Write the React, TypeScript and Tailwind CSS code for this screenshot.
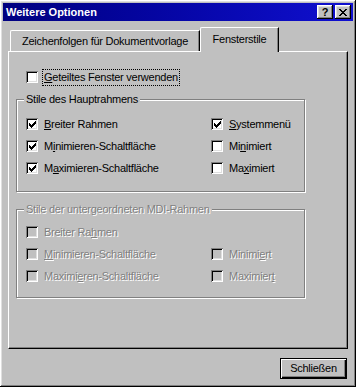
import React from "react"

const raised =
  "shadow-[inset_-1px_-1px_0_#000,inset_1px_1px_0_#fff,inset_-2px_-2px_0_#808080,inset_2px_2px_0_#dfdfdf]"

// "&" marks the accelerator letter
function Label({ text }: { text: string }) {
  const i = text.indexOf("&")
  if (i < 0) return <>{text}</>
  return (
    <>
      {text.slice(0, i)}
      <u className="underline-offset-[1px]">{text[i + 1]}</u>
      {text.slice(i + 2)}
    </>
  )
}

function CheckMark() {
  return (
    <svg width="7" height="7" viewBox="0 0 7 7" shapeRendering="crispEdges">
      <path
        fill="#000"
        d="M6 0h1v1h-1z M5 1h2v1h-2z M0 2h1v1h-1z M4 2h3v1h-3z M0 3h2v1h-2z M3 3h3v1h-3z M0 4h5v1h-5z M1 5h3v1h-3z M2 6h1v1h-1z"
      />
    </svg>
  )
}

function Check({
  label,
  checked = false,
  disabled = false,
  focus = false,
}: {
  label: string
  checked?: boolean
  disabled?: boolean
  focus?: boolean
}) {
  return (
    <div className="flex items-center h-[22px]">
      <div
        className={`w-[12px] h-[12px] flex items-center justify-center shrink-0 shadow-[inset_1px_1px_0_#808080,inset_-1px_-1px_0_#fff,inset_2px_2px_0_#000,inset_-2px_-2px_0_#dfdfdf] ${
          disabled ? "bg-[#c0c0c0]" : "bg-white"
        }`}
      >
        {checked && <CheckMark />}
      </div>
      <span
        className={`ml-[4px] px-[1px] whitespace-nowrap leading-[15px] border border-dotted ${
          focus ? "border-black" : "border-transparent"
        } ${disabled ? "text-[#808080] [text-shadow:1px_1px_0_#fff]" : "text-black"}`}
      >
        <Label text={label} />
      </span>
    </div>
  )
}

function Group({
  title,
  disabled = false,
  className = "",
  children,
}: {
  title: string
  disabled?: boolean
  className?: string
  children: React.ReactNode
}) {
  return (
    <div
      className={`relative w-[289px] border border-[#808080] shadow-[1px_1px_0_#fff,inset_1px_1px_0_#fff] pl-[9px] ${className}`}
    >
      <span
        className={`absolute -top-[8px] left-[7px] bg-[#c0c0c0] px-[2px] leading-[15px] whitespace-nowrap ${
          disabled ? "text-[#808080] [text-shadow:1px_1px_0_#fff]" : "text-black"
        }`}
      >
        {title}
      </span>
      <div className="grid grid-cols-[185px_1fr]">{children}</div>
    </div>
  )
}

export default function App() {
  return (
    <div
      className={`w-[356px] h-[387px] bg-[#c0c0c0] p-[3px] flex flex-col text-[11px] tracking-[-0.25px] text-black ${raised}`}
      style={{ fontFamily: '"Liberation Sans", Arial, sans-serif' }}
    >
      {/* Titelleiste */}
      <div className="h-[18px] flex items-center justify-between bg-gradient-to-r from-[#000080] to-[#1010d0] pl-[3px] pr-[2px]">
        <span className="text-white font-bold text-[11px] tracking-normal whitespace-nowrap">Weitere Optionen</span>
        <div className="flex gap-[2px]">
          <div className={`w-[16px] h-[14px] bg-[#c0c0c0] flex items-center justify-center ${raised}`}>
            <span className="font-bold text-[11px] leading-none mt-[1px]">?</span>
          </div>
          <div className={`w-[16px] h-[14px] bg-[#c0c0c0] flex items-center justify-center ${raised}`}>
            <svg width="8" height="7" viewBox="0 0 8 7" shapeRendering="crispEdges">
              <path
                fill="#000"
                d="M0 0h2v1h-2z M6 0h2v1h-2z M1 1h2v1h-2z M5 1h2v1h-2z M2 2h4v1h-4z M3 3h2v1h-2z M2 4h4v1h-4z M1 5h2v1h-2z M5 5h2v1h-2z M0 6h2v1h-2z M6 6h2v1h-2z"
              />
            </svg>
          </div>
        </div>
      </div>

      <div className="px-[5px] mt-[6px] flex flex-col">
        {/* Registerkarten */}
        <div className="flex items-end pl-[2px]">
          <div className="w-[190px] h-[21px] flex items-center justify-center border-t border-l border-white rounded-tl-[2px] border-r border-r-black shadow-[inset_-1px_0_0_#808080] whitespace-nowrap">
            Zeichenfolgen für Dokumentvorlage
          </div>
          <div className="relative z-10 -mb-px w-[79px] h-[25px] bg-[#c0c0c0] flex items-center justify-center pb-[1px] border-t border-l border-white rounded-tl-[2px] border-r border-r-black shadow-[inset_-1px_0_0_#808080] whitespace-nowrap">
            Fensterstile
          </div>
        </div>

        {/* Seite */}
        <div className="h-[298px] border border-t-white border-l-white border-r-black border-b-black shadow-[inset_-1px_-1px_0_#808080] pl-[7px] pt-[14px]">
          <div className="pl-[10px]">
            <Check label="&Geteiltes Fenster verwenden" focus />
          </div>

          <Group title="Stile des Hauptrahmens" className="mt-[11px] pt-[13px] pb-[12px]">
            <Check label="&Breiter Rahmen" checked />
            <Check label="&Systemmenü" checked />
            <Check label="M&inimieren-Schaltfläche" checked />
            <Check label="Mi&nimiert" />
            <Check label="M&aximieren-Schaltfläche" checked />
            <Check label="Ma&ximiert" />
          </Group>

          <Group title="Stile der untergeordneten MDI-Rahmen" disabled className="mt-[17px] pt-[11px] pb-[10px]">
            <Check label="Breiter Ra&hmen" disabled />
            <div />
            <Check label="&Minimieren-Schaltfläche" disabled />
            <Check label="Minimi&ert" disabled />
            <Check label="Maximi&eren-Schaltfläche" disabled />
            <Check label="Maximier&t" disabled />
          </Group>
        </div>

        {/* Schaltfläche */}
        <div className="flex justify-end mt-[9px] pr-[1px]">
          <div className="w-[67px] h-[21px] border border-black flex items-center justify-center shadow-[inset_1px_1px_0_#fff,inset_-1px_-1px_0_#000,inset_-2px_-2px_0_#808080] whitespace-nowrap">
            Schließen
          </div>
        </div>
      </div>
    </div>
  )
}
